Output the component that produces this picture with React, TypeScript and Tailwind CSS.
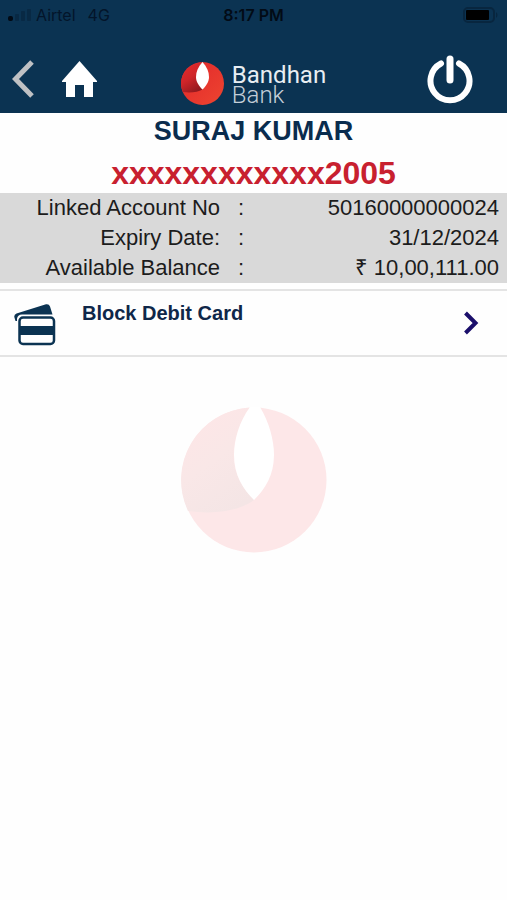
/**
 * Debit Card Details Screen
 *
 * Shows the card holder, the masked card number, the linked account
 * summary and the list of actions available for the card.
 */

const details = [
  { label: "Linked Account No", value: "50160000000024" },
  { label: "Expiry Date:", value: "31/12/2024" },
  { label: "Available Balance", value: "₹ 10,00,111.00" },
];

// Phone status bar: signal, carrier, time and battery
const StatusBar = () => {
  return (
    <div className="grid grid-cols-3 items-center h-7 px-2 pt-0.5 font-['Inter',sans-serif] text-base text-[#03152a]">
      <div className="flex items-center gap-1">
        <svg width="24" height="12" viewBox="0 0 24 12" aria-hidden="true">
          <rect x="0" y="7" width="5" height="5" rx="2" fill="#020a14" />
          <rect x="7" y="5" width="4" height="7" rx="1" fill="#082944" />
          <rect x="13" y="2" width="4" height="10" rx="1" fill="#082944" />
          <rect x="19" y="0" width="4" height="12" rx="1" fill="#082944" />
        </svg>
        <span>Airtel</span>
        <span className="ml-2">4G</span>
      </div>
      <span className="text-center font-semibold text-[#020b16]">8:17 PM</span>
      <svg className="justify-self-end" width="36" height="16" viewBox="0 0 36 16" aria-hidden="true">
        <rect x="1" y="1" width="30" height="14" rx="4" fill="#0b3352" stroke="#08263f" strokeWidth="2" />
        <rect x="3" y="3" width="23" height="10" rx="1" fill="#000" />
        <path d="M33 5v6q3-3 0-6z" fill="#08263f" />
      </svg>
    </div>
  );
};

const Logo = () => {
  return (
    <div className="flex items-center gap-2">
      <svg width="43" height="43" viewBox="0 0 43 43" className="mt-2" aria-hidden="true">
        <defs>
          <linearGradient id="logo-red" x1="0" y1="0" x2="1" y2="1">
            <stop offset="0" stopColor="#e0262b" />
            <stop offset="1" stopColor="#ee4530" />
          </linearGradient>
          <linearGradient id="logo-shade" x1="0.2" y1="0" x2="0.7" y2="1">
            <stop offset="0" stopColor="#e32b2c" />
            <stop offset="0.5" stopColor="#cf2529" />
            <stop offset="1" stopColor="#8f191e" />
          </linearGradient>
        </defs>
        <circle cx="21.5" cy="21.5" r="21.5" fill="url(#logo-red)" />
        <path d="M19 0.500C8 2 0 11 0 21.500c0 3 1 6 2 8.500 8 1 15 0 19.500-2.500C15 21 14 10 20 1z" fill="url(#logo-shade)" />
        <path d="M21.500 0C17 5 15 10 15 15c0 5 3 9 6.500 12.500C25 24 28 20 28 15c0-5-2-10-6.500-15z" fill="#fff" />
      </svg>
      <div className="flex flex-col pt-3 font-['Roboto',sans-serif] text-2xl leading-5">
        <span className="text-[#e8eef3]">Bandhan</span>
        <span className="font-light text-[#c3ced8]">Bank</span>
      </div>
    </div>
  );
};

// Faded brand mark shown under the actions
const Watermark = () => {
  return (
    <svg className="mx-auto mt-[50px]" width="146" height="146" viewBox="0 0 146 146" aria-hidden="true">
      <defs>
        <linearGradient id="mark-shade" x1="0.2" y1="0" x2="0.7" y2="1">
          <stop offset="0" stopColor="#fee6e7" />
          <stop offset="0.5" stopColor="#f9e7e7" />
          <stop offset="1" stopColor="#f4e5e5" />
        </linearGradient>
      </defs>
      <circle cx="73" cy="73" r="72.5" fill="#fde7e8" />
      <path d="M68 0.700A72.500 72.500 0 0 0 7 104C36 108 60 103 73 93C50 70 44 40 68 0.700z" fill="url(#mark-shade)" />
      <path d="M69 0C58 15 53 33 53 48c0 20 9 34 20 45 11-11 20-25 20-45 0-15-5-33-14-48z" fill="#fff" />
    </svg>
  );
};

const App = () => {
  return (
    <div className="min-h-screen bg-[#fefefe] font-['Liberation_Sans',Arial,sans-serif]">
      <header className="bg-[#0b3352] border-b border-[#0b3352]">
        <StatusBar />
        <nav className="grid grid-cols-[1fr_auto_1fr] items-center h-[84px] pt-[18px]">
          <div className="flex items-center gap-7 pl-3">
            <button type="button" aria-label="Back">
              <svg width="22" height="38" viewBox="0 0 22 38" aria-hidden="true">
                <path d="M20 2 3.500 19 20 36" fill="none" stroke="#bfc1c4" strokeWidth="5" />
              </svg>
            </button>
            <button type="button" aria-label="Home">
              <svg width="35" height="36" viewBox="0 0 35 36" fill="#fff" aria-hidden="true">
                <path d="M17.500 0 35 20V21H31V36H22V24H13V36H4V21H0V20z" />
              </svg>
            </button>
          </div>
          <Logo />
          <button type="button" aria-label="Log out" className="justify-self-end mr-[34px]">
            <svg width="46" height="50" viewBox="0 0 46 50" fill="none" stroke="#fff" strokeLinecap="round" aria-hidden="true">
              <path d="M14 9.500A19.500 19.500 0 1 0 32 9.500" strokeWidth="6" />
              <path d="M23 5V26" strokeWidth="7" />
            </svg>
          </button>
        </nav>
      </header>

      <main>
        <section>
          <h1 className="text-center text-[27px] leading-9 font-bold text-[#0a2c4e]">SURAJ KUMAR</h1>
          <p className="text-center text-[32px] leading-10 pt-1 font-bold text-[#c8202f]">xxxxxxxxxxxx2005</p>

          <table className="w-full bg-[#d9d9d9] text-[22px] leading-[30px] text-[#1c1c1c]">
            <tbody>
              {details.map(({ label, value }) => (
                <tr key={label}>
                  <th scope="row" className="w-[44%] p-0 pr-[3px] text-right font-normal">
                    {label}
                  </th>
                  <td className="w-9 p-0 text-center">:</td>
                  <td className="p-0 pr-2 text-right">{value}</td>
                </tr>
              ))}
            </tbody>
          </table>
        </section>

        {/* Card actions */}
        <ul className="mt-1.5 border-y-2 border-[#e4e4e4]">
          <li>
            <button type="button" className="flex items-center w-full h-16 pl-3.5 pr-7 text-left">
              <svg width="42" height="42" viewBox="0 0 42 42" className="mt-1" aria-hidden="true">
                <path d="M1.500 17 0.300 13Q0 10.500 2.500 9.500L32 0.300Q35 -0.300 36 2.500L38.500 10.500H8Q3.500 10.500 3 15V17z" fill="#0b3352" />
                <rect x="5.500" y="13.500" width="34.500" height="26.500" rx="3.500" fill="#fff" stroke="#0b3352" strokeWidth="2.500" />
                <rect x="6" y="22" width="34" height="9" fill="#0b3352" />
              </svg>
              <span className="grow self-start pl-[26px] pt-2 text-xl leading-7 font-bold text-[#0f2749]">
                Block Debit Card
              </span>
              <svg width="16" height="26" viewBox="0 0 16 26" fill="none" aria-hidden="true">
                <path d="M2.500 3 12.500 13 2.500 23" stroke="#1b0f6b" strokeWidth="4" />
              </svg>
            </button>
          </li>
        </ul>

        <Watermark />
      </main>
    </div>
  );
};

export default App;
